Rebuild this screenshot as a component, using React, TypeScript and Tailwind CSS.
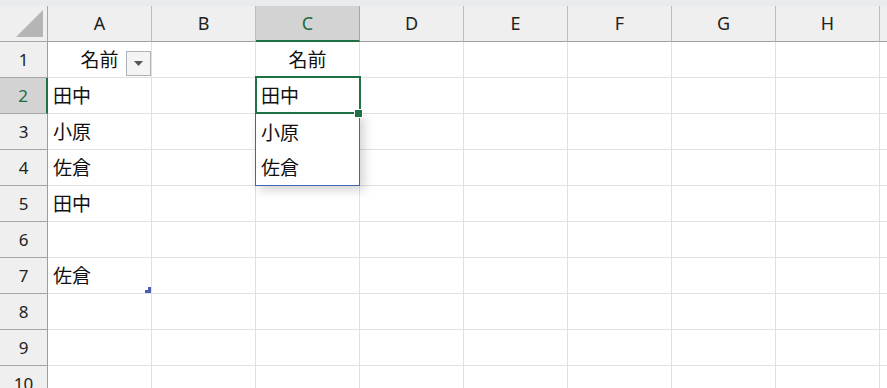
import React from 'react';

const COLS = ['A', 'B', 'C', 'D', 'E', 'F', 'G', 'H', 'I'];
const ROWS = [1, 2, 3, 4, 5, 6, 7, 8, 9, 10];

// セルの値（A列のみ、C列はリスト側で描く）
const cellValues: Record<string, string> = {
    A2: '田中',
    A3: '小原',
    A4: '佐倉',
    A5: '田中',
    A7: '佐倉',
};

const jp = { fontFamily: '"Noto Sans CJK JP", "Noto Sans", sans-serif' };
const ui = { fontFamily: '"Noto Sans", "Liberation Sans", sans-serif' };

export default function App() {
    return (
        <div className="w-[887px] h-[388px] overflow-hidden bg-white relative">
            {/* 上部の帯 */}
            <div className="h-[6px] bg-[#e9ecef]" />

            {/* 列見出し */}
            <div className="flex h-[36px]" style={ui}>
                <div className="w-[48px] shrink-0 bg-[#efefef] border-r border-b border-[#a6a6a6] relative">
                    <svg className="absolute left-[16px] top-[4px]" width="28" height="28" viewBox="0 0 28 28">
                        <polygon points="0,27 27,27 27,0" fill="#b5b5b5" />
                    </svg>
                </div>
                {COLS.map(c => (
                    <div
                        key={c}
                        className={`w-[104px] shrink-0 flex items-center justify-center text-[18px] border-r ${c === 'C'
                            ? 'bg-[#d3d3d3] text-[#1e6b41] border-[#a6a6a6] border-b-2 border-b-[#1e7145]'
                            : 'bg-[#efefef] text-[#222] border-[#bcbcbc] border-b border-b-[#a0a0a0]'
                            }`}
                    >
                        {c === 'I' ? '' : c}
                    </div>
                ))}
            </div>

            {/* 行 */}
            {ROWS.map(r => (
                <div key={r} className="flex h-[36px]">
                    <div
                        className={`w-[48px] shrink-0 flex items-center justify-center text-[17px] border-b border-[#a6a6a6] ${r === 2
                            ? 'bg-[#d3d3d3] text-[#1e6b41] border-r-2 border-r-[#1e7145]'
                            : 'bg-[#efefef] text-[#222] border-r border-r-[#9e9e9e]'
                            }`}
                        style={ui}
                    >
                        {r}
                    </div>
                    {COLS.map(c => {
                        const key = `${c}${r}`;
                        const isHeader = r === 1 && (c === 'A' || c === 'C');
                        return (
                            <div
                                key={key}
                                className={`w-[104px] shrink-0 border-r border-b border-[#e1e1e1] flex items-center text-[19px] text-[#111] relative ${isHeader ? 'justify-center' : 'pl-[5px]'
                                    }`}
                                style={jp}
                            >
                                {isHeader ? '名前' : cellValues[key]}
                                {key === 'A1' && (
                                    <div className="absolute left-[78px] top-[9px] w-[25px] h-[25px] border border-[#abb1b9] bg-[#f4f4f4] flex items-center justify-center">
                                        <svg width="9" height="5" viewBox="0 0 9 5">
                                            <polygon points="0,0 9,0 4.5,5" fill="#555" />
                                        </svg>
                                    </div>
                                )}
                            </div>
                        );
                    })}
                </div>
            ))}

            {/* ドロップダウンリスト */}
            <div className="absolute left-[255px] top-[113px] w-[105px] h-[73px] bg-white border border-[#3f65b5] shadow-[4px_4px_10px_rgba(0,0,0,0.18)]" style={jp}>
                <div className="h-[36px] flex items-center pl-[5px] text-[19px] text-[#111]">小原</div>
                <div className="h-[35px] flex items-center pl-[5px] text-[19px] text-[#111]">佐倉</div>
            </div>

            {/* アクティブセル C2 */}
            <div className="absolute left-[255px] top-[76px] w-[106px] h-[38px] border-2 border-[#1e7145] bg-white flex items-center pl-[4px] text-[19px] text-[#111]" style={jp}>
                田中
            </div>
            <div className="absolute left-[354px] top-[109px] w-[9px] h-[9px] bg-[#1e7145] border border-white" />

            {/* テーブルのサイズ変更ハンドル */}
            <svg className="absolute left-[145px] top-[287px]" width="7" height="6" viewBox="0 0 7 6">
                <polygon points="3,0 6,0 6,6 0,6 0,3 3,3" fill="#4a5cb5" />
            </svg>
        </div>
    );
}
